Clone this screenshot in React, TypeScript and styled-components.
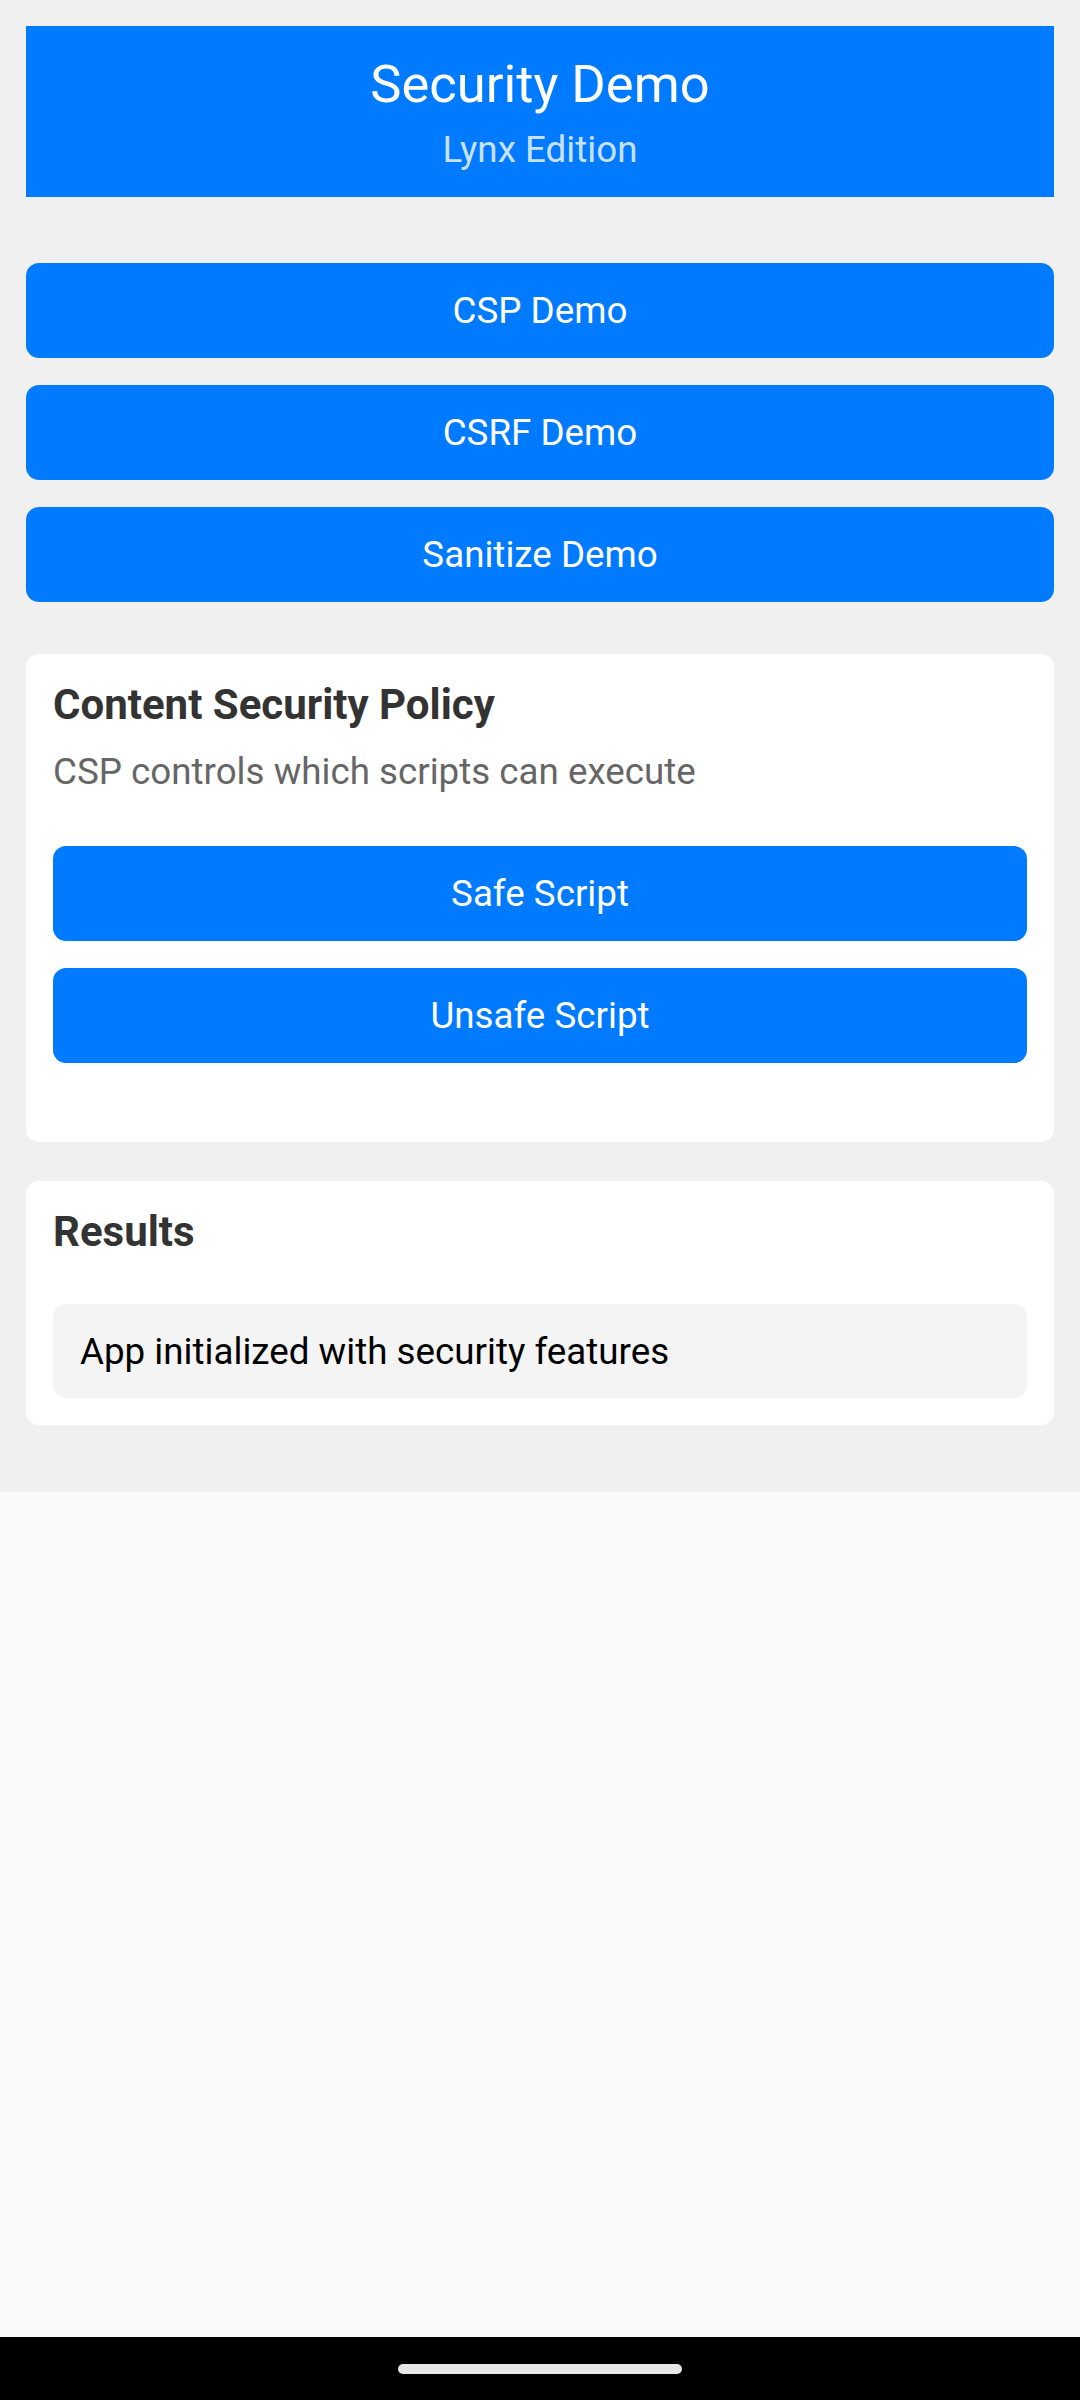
import styled, { createGlobalStyle } from "styled-components";

const GlobalStyle = createGlobalStyle`
  html, body {
    margin: 0;
    padding: 0;
    background: #fafafa;
    font-family: Roboto, "Noto Sans", "Liberation Sans", sans-serif;
  }
  * {
    box-sizing: border-box;
  }
`;

const Screen = styled.div`
  display: flex;
  flex-direction: column;
  width: 1080px;
  min-height: 2400px;
  background: #fafafa;
`;

const Container = styled.div`
  display: flex;
  flex-direction: column;
  background: #f0f0f0;
  padding: 26px 26px 67px;
`;

const Header = styled.div`
  display: flex;
  flex-direction: column;
  align-items: center;
  background: #007aff;
  padding: 26px 0 25px;
  margin-bottom: 66px;
`;

const Title = styled.div`
  color: #ffffff;
  font-size: 52.5px;
  line-height: 64px;
  margin-bottom: 11px;
`;

const Subtitle = styled.div`
  color: rgba(255, 255, 255, 0.8);
  font-size: 36.75px;
  line-height: 45px;
`;

const ButtonList = styled.div<{ $bottom: number }>`
  display: flex;
  flex-direction: column;
  gap: 27px;
  margin-bottom: ${(p) => p.$bottom}px;
`;

const Button = styled.div`
  display: flex;
  align-items: center;
  justify-content: center;
  height: 95px;
  border-radius: 13px;
  background: #007aff;
  color: #ffffff;
  font-size: 36.75px;
`;

const Card = styled.div`
  display: flex;
  flex-direction: column;
  background: #ffffff;
  border-radius: 13px;
  padding: 28px 27px 27px;
  & + & {
    margin-top: 39px;
  }
`;

const CardTitle = styled.div<{ $gap: number }>`
  color: #333333;
  font-size: 42px;
  font-weight: 700;
  line-height: 46px;
  margin-bottom: ${(p) => p.$gap}px;
`;

const Description = styled.div`
  color: #666666;
  font-size: 36.75px;
  line-height: 45px;
  margin-bottom: 52px;
`;

const ResultItem = styled.div`
  background: #f4f4f4;
  border-radius: 13px;
  padding: 25px 27px 24px;
  color: #000000;
  font-size: 36.75px;
  line-height: 45px;
`;

const Filler = styled.div`
  flex: 1;
  background: #fafafa;
`;

const NavBar = styled.div`
  display: flex;
  justify-content: center;
  align-items: flex-start;
  height: 63px;
  padding-top: 27px;
  background: #000000;
`;

const NavHandle = styled.div`
  width: 284px;
  height: 10px;
  border-radius: 5px;
  background: #e8e8e8;
`;

const demos = ["CSP Demo", "CSRF Demo", "Sanitize Demo"];
const scripts = ["Safe Script", "Unsafe Script"];
const results = ["App initialized with security features"];

export default function App() {
  return (
    <>
      <GlobalStyle />
      <Screen>
        <Container>
          <Header>
            <Title>Security Demo</Title>
            <Subtitle>Lynx Edition</Subtitle>
          </Header>

          <ButtonList $bottom={52}>
            {demos.map((d) => (
              <Button key={d}>{d}</Button>
            ))}
          </ButtonList>

          <Card>
            <CardTitle $gap={21}>Content Security Policy</CardTitle>
            <Description>CSP controls which scripts can execute</Description>
            <ButtonList $bottom={52}>
              {scripts.map((s) => (
                <Button key={s}>{s}</Button>
              ))}
            </ButtonList>
          </Card>

          <Card>
            <CardTitle $gap={49}>Results</CardTitle>
            {results.map((r) => (
              <ResultItem key={r}>{r}</ResultItem>
            ))}
          </Card>
        </Container>
        <Filler />
        <NavBar>
          <NavHandle />
        </NavBar>
      </Screen>
    </>
  );
}
